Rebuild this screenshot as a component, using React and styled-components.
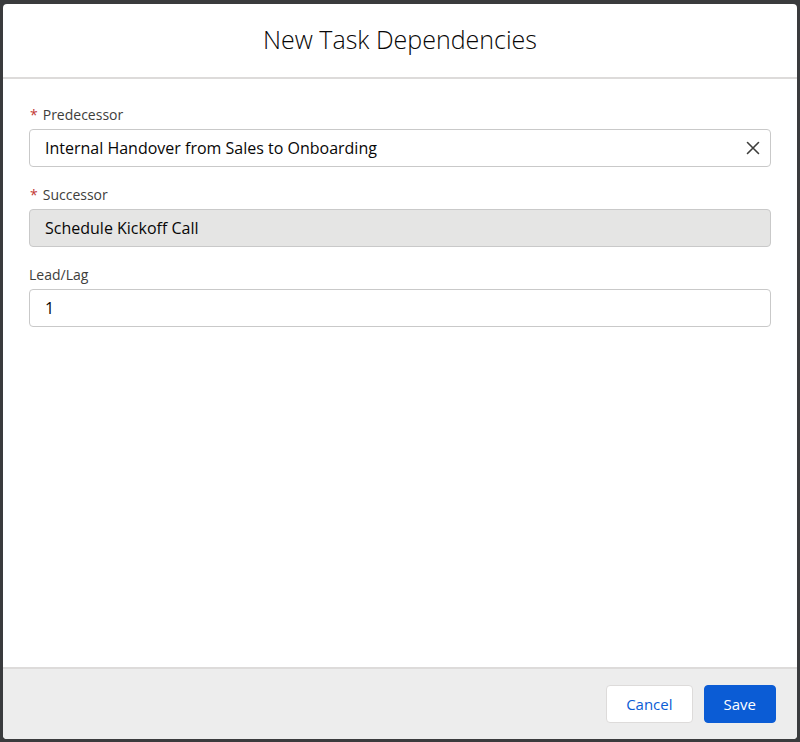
import React from 'react';
import styled, { createGlobalStyle } from 'styled-components';

const GlobalStyle = createGlobalStyle`
  html, body {
    margin: 0;
    padding: 0;
    background: #3a3b3d;
  }
  * {
    box-sizing: border-box;
  }
`;

const Backdrop = styled.div`
  height: 742px;
  padding: 4px 3px 3px 3px;
  display: flex;
`;

const Modal = styled.div`
  flex: 1;
  display: flex;
  flex-direction: column;
  background: #fff;
  border-radius: 4px;
  overflow: hidden;
  font-family: 'Open Sans', 'Liberation Sans', sans-serif;
  color: #080707;
`;

const Header = styled.div`
  height: 75px;
  display: flex;
  align-items: center;
  justify-content: center;
  padding-bottom: 3px;
  border-bottom: 2px solid #dddbda;
`;

const Title = styled.h2`
  margin: 0;
  font-size: 25px;
  font-weight: 300;
  color: #080707;
`;

const Body = styled.div`
  flex: 1;
  padding: 26px 26px 0 26px;
  display: flex;
  flex-direction: column;
  gap: 18px;
`;

const Field = styled.div`
  display: flex;
  flex-direction: column;
`;

const LabelText = styled.label`
  font-size: 14px;
  color: #3e3e3c;
  line-height: 20px;
  margin-bottom: 4px;

  abbr {
    color: #c23934;
    text-decoration: none;
    margin: 0 5px 0 1px;
  }
`;

const InputBox = styled.div`
  height: 38px;
  display: flex;
  align-items: center;
  padding: 0 15px;
  border: 1px solid #c9c9c9;
  border-radius: 4px;
  background: ${props => (props.disabled ? '#e5e5e4' : '#fff')};
  font-size: 16px;
  color: #080707;
`;

const Value = styled.span`
  flex: 1;
`;

const ClearButton = styled.button`
  border: none;
  background: none;
  padding: 0;
  margin-right: -5px;
  display: flex;
  align-items: center;
  cursor: pointer;
  color: #3e3e3c;
`;

const Footer = styled.div`
  height: 72px;
  border-top: 2px solid #dddbda;
  background: #ededed;
  display: flex;
  align-items: center;
  justify-content: flex-end;
  gap: 11px;
  padding: 0 21px 0 0;
`;

const Button = styled.button`
  height: 38px;
  padding: 0 19px;
  border-radius: 4px;
  font-family: 'Open Sans', 'Liberation Sans', sans-serif;
  font-size: 15px;
  cursor: pointer;
  border: 1px solid ${props => (props.brand ? '#0b5cd5' : '#dddbda')};
  background: ${props => (props.brand ? '#0b5cd5' : '#fff')};
  color: ${props => (props.brand ? '#fff' : '#0b5cd5')};
`;

const Label = ({ required, children }) => (
  <LabelText>
    {required && <abbr title="required">*</abbr>}
    {children}
  </LabelText>
);

const CloseIcon = () => (
  <svg width="14" height="14" viewBox="0 0 14 14" fill="none">
    <path d="M1.5 1.5 L12.5 12.5 M12.5 1.5 L1.5 12.5" stroke="#3e3e3c" strokeWidth="1.6" strokeLinecap="round" />
  </svg>
);

export default function App() {
  return (
    <>
      <GlobalStyle />
      <Backdrop>
        <Modal>
          <Header>
            <Title>New Task Dependencies</Title>
          </Header>
          <Body>
            <Field>
              <Label required>Predecessor</Label>
              <InputBox>
                <Value>Internal Handover from Sales to Onboarding</Value>
                <ClearButton aria-label="Clear">
                  <CloseIcon />
                </ClearButton>
              </InputBox>
            </Field>
            <Field>
              <Label required>Successor</Label>
              <InputBox disabled>
                <Value>Schedule Kickoff Call</Value>
              </InputBox>
            </Field>
            <Field>
              <Label>Lead/Lag</Label>
              <InputBox>
                <Value>1</Value>
              </InputBox>
            </Field>
          </Body>
          <Footer>
            <Button>Cancel</Button>
            <Button brand>Save</Button>
          </Footer>
        </Modal>
      </Backdrop>
    </>
  );
}
